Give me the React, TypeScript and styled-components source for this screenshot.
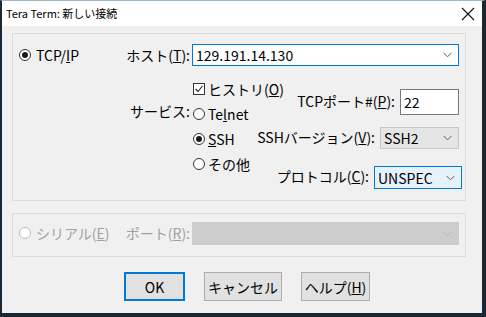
import React from "react";
import styled, { createGlobalStyle, css } from "styled-components";

const Color = {
  frame: "#1b2733",
  face: "#f0f0f0",
  groupLine: "#dcdcdc",
  accent: "#0078d7",
  text: "#000000",
  disabledText: "#a0a0a0",
  buttonFace: "#e1e1e1",
  buttonLine: "#adadad",
};

const GlobalStyle = createGlobalStyle`
  html, body {
    margin: 0;
    padding: 0;
    background: ${Color.face};
  }
  * {
    box-sizing: border-box;
  }
`;

const Chevron = ({ color = "#606060" }: { color?: string }) => (
  <svg width="9" height="6" viewBox="0 0 9 6">
    <path d="M0.5 0.8 L4.5 4.8 L8.5 0.8" fill="none" stroke={color} strokeWidth="1" />
  </svg>
);

const App = () => {
  return (
    <>
      <GlobalStyle />
      <Window>
        <TitleBar>
          <TitleText>Tera Term: 新しい接続</TitleText>
          <CloseButton>
            <svg width="14" height="14" viewBox="0 0 14 14">
              <path d="M1 1 L13 13 M13 1 L1 13" stroke="#111" strokeWidth="1.1" />
            </svg>
          </CloseButton>
        </TitleBar>

        <Body>
          <Group $height={168}>
            <GroupGrid>
              <RadioItem>
                <Radio $checked />
                <span>
                  TCP/<u>I</u>P
                </span>
              </RadioItem>
              <Label>
                ホスト(<u>T</u>):
              </Label>
              <Combo $variant="edit">
                <ComboText>129.191.14.130</ComboText>
                <Chevron />
              </Combo>

              <Spacer />
              <Label $top={24}>サービス:</Label>
              <ServiceArea>
                <OptionsCol>
                  <OptionRow>
                    <CheckBox>
                      <svg width="10" height="10" viewBox="0 0 10 10">
                        <path d="M1.5 5 L4 7.5 L8.5 2" fill="none" stroke="#222" strokeWidth="1.1" />
                      </svg>
                    </CheckBox>
                    <span>
                      ヒストリ(<u>O</u>)
                    </span>
                  </OptionRow>
                  <OptionRow>
                    <Radio />
                    <span>
                      Te<u>l</u>net
                    </span>
                  </OptionRow>
                  <OptionRow>
                    <Radio $checked />
                    <span>
                      <u>S</u>SH
                    </span>
                  </OptionRow>
                  <OptionRow>
                    <Radio />
                    <span>その他</span>
                  </OptionRow>
                </OptionsCol>

                <FieldsCol>
                  <FieldRow $top={13}>
                    <FieldLabel>
                      TCPポート#(<u>P</u>):
                    </FieldLabel>
                    <PortInput>22</PortInput>
                  </FieldRow>
                  <FieldRow $top={12}>
                    <FieldLabel>
                      SSHバージョン(<u>V</u>):
                    </FieldLabel>
                    <Combo $variant="list" $width={79} $height={22}>
                      <ComboText>SSH2</ComboText>
                      <Chevron />
                    </Combo>
                  </FieldRow>
                  <FieldRow $top={17} $shift={3}>
                    <FieldLabel>
                      プロトコル(<u>C</u>):
                    </FieldLabel>
                    <Combo $variant="hot" $width={88} $height={23}>
                      <ComboText>UNSPEC</ComboText>
                      <Chevron />
                    </Combo>
                  </FieldRow>
                </FieldsCol>
              </ServiceArea>
            </GroupGrid>
          </Group>

          <Group $height={44} $top={12} $padTop={8}>
            <GroupGrid>
              <RadioItem $disabled>
                <Radio $disabled />
                <span>
                  シリアル(<u>E</u>)
                </span>
              </RadioItem>
              <Label $disabled>
                ポート(<u>R</u>):
              </Label>
              <Combo $variant="disabled" $height={23}>
                <ComboText />
                <Chevron color="#b4b4b4" />
              </Combo>
            </GroupGrid>
          </Group>

          <ButtonRow>
            <Button $default $width={61}>
              OK
            </Button>
            <Button $width={78}>キャンセル</Button>
            <Button $width={69}>
              ヘルプ(<u>H</u>)
            </Button>
          </ButtonRow>
        </Body>
      </Window>
    </>
  );
};

const Window = styled.div`
  display: flex;
  flex-direction: column;
  width: 486px;
  height: 317px;
  border-left: 2px solid ${Color.frame};
  border-right: 4px solid ${Color.frame};
  border-bottom: 4px solid ${Color.frame};
  border-top: 1px solid #9fb6cf;
  font-family: "Noto Sans CJK JP", "Noto Sans", sans-serif;
  font-size: 14px;
  color: ${Color.text};
  overflow: hidden;
`;

const TitleBar = styled.div`
  display: flex;
  align-items: center;
  height: 25px;
  background: #ffffff;
  padding-left: 4px;
`;

const TitleText = styled.span`
  flex: 1;
  font-size: 11px;
  line-height: 1;
`;

const CloseButton = styled.div`
  display: flex;
  align-items: center;
  justify-content: center;
  width: 28px;
  height: 25px;
`;

const Body = styled.div`
  flex: 1;
  display: flex;
  flex-direction: column;
  background: ${Color.face};
  padding: 7px 16px 0 10px;
`;

const Group = styled.div<{ $height: number; $top?: number; $padTop?: number }>`
  height: ${(p) => p.$height}px;
  margin-top: ${(p) => p.$top ?? 0}px;
  padding: ${(p) => p.$padTop ?? 10}px 6px 0 6px;
  border: 1px solid ${Color.groupLine};
`;

const GroupGrid = styled.div`
  display: grid;
  grid-template-columns: 102px 67px 1fr;
  column-gap: 2px;
  row-gap: 10px;
  align-items: start;
`;

const Spacer = styled.div``;

const Label = styled.div<{ $top?: number; $disabled?: boolean }>`
  display: flex;
  align-items: center;
  justify-content: flex-end;
  height: 22px;
  margin-top: ${(p) => p.$top ?? 0}px;
  white-space: nowrap;
  color: ${(p) => (p.$disabled ? Color.disabledText : Color.text)};
`;

const RadioItem = styled.div<{ $disabled?: boolean }>`
  display: flex;
  align-items: center;
  gap: 5px;
  height: 22px;
  white-space: nowrap;
  color: ${(p) => (p.$disabled ? Color.disabledText : Color.text)};
`;

const Radio = styled.span<{ $checked?: boolean; $disabled?: boolean }>`
  position: relative;
  flex: none;
  width: 12px;
  height: 12px;
  border-radius: 50%;
  border: 1px solid ${(p) => (p.$disabled ? "#bcbcbc" : "#333333")};
  background: #ffffff;
  ${(p) =>
    p.$checked &&
    css`
      &::after {
        content: "";
        position: absolute;
        left: 2px;
        top: 2px;
        width: 6px;
        height: 6px;
        border-radius: 50%;
        background: #1a1a1a;
      }
    `}
`;

const CheckBox = styled.span`
  display: flex;
  align-items: center;
  justify-content: center;
  flex: none;
  width: 12px;
  height: 12px;
  border: 1px solid #333333;
  background: #ffffff;
`;

const Combo = styled.div<{
  $variant: "edit" | "list" | "hot" | "disabled";
  $width?: number;
  $height?: number;
}>`
  display: flex;
  align-items: center;
  width: ${(p) => (p.$width ? `${p.$width}px` : "100%")};
  height: ${(p) => p.$height ?? 22}px;
  padding: 0 6px 0 3px;
  ${(p) =>
    p.$variant === "edit" &&
    css`
      background: #ffffff;
      border: 1px solid ${Color.accent};
    `}
  ${(p) =>
    p.$variant === "list" &&
    css`
      background: #e5e5e5;
      border: 1px solid #c6c6c6;
    `}
  ${(p) =>
    p.$variant === "hot" &&
    css`
      background: #e5f1fb;
      border: 1px solid ${Color.accent};
    `}
  ${(p) =>
    p.$variant === "disabled" &&
    css`
      background: #cccccc;
      border: 1px solid #cccccc;
    `}
`;

const ComboText = styled.span`
  flex: 1;
  white-space: nowrap;
`;

/* options and port/version/protocol fields share one cell; they interleave by height */
const ServiceArea = styled.div`
  display: grid;
  grid-template-areas: "cell";
  & > * {
    grid-area: cell;
  }
`;

const OptionsCol = styled.div`
  display: flex;
  flex-direction: column;
  justify-self: start;
  padding-left: 1px;
`;

const OptionRow = styled.div`
  display: flex;
  align-items: center;
  gap: 3px;
  height: 25px;
  white-space: nowrap;
`;

const FieldsCol = styled.div`
  display: flex;
  flex-direction: column;
  align-items: flex-end;
  justify-self: end;
`;

const FieldRow = styled.div<{ $top: number; $shift?: number }>`
  display: flex;
  align-items: center;
  gap: 5px;
  margin-top: ${(p) => p.$top}px;
  margin-right: -${(p) => p.$shift ?? 0}px;
`;

const FieldLabel = styled.span`
  white-space: nowrap;
  margin-top: -3px;
`;

const PortInput = styled.div`
  display: flex;
  align-items: center;
  width: 59px;
  height: 26px;
  padding-left: 3px;
  background: #ffffff;
  border: 1px solid #7a7a7a;
`;

const ButtonRow = styled.div`
  display: flex;
  gap: 19px;
  margin: 15px 0 0 112px;
`;

const Button = styled.div<{ $width: number; $default?: boolean }>`
  display: flex;
  align-items: center;
  justify-content: center;
  width: ${(p) => p.$width}px;
  height: 29px;
  background: ${Color.buttonFace};
  border: ${(p) => (p.$default ? `2px solid ${Color.accent}` : `1px solid ${Color.buttonLine}`)};
  white-space: nowrap;
`;

export default App;
